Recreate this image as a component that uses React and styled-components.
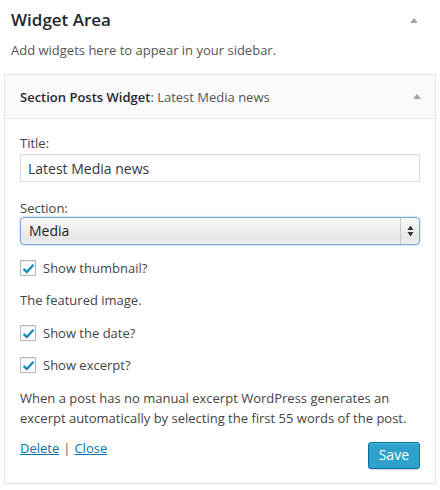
import React from "react";
import styled, { createGlobalStyle } from "styled-components";

const Global = createGlobalStyle`
  html, body { margin: 0; padding: 0; background: #fff; }
  body { font-family: "Open Sans", "Noto Sans", sans-serif; color: #444; font-size: 13px; }
  * { box-sizing: border-box; }
`;

const Page = styled.div`
  width: 440px;
  height: 490px;
  padding: 4px 4px 0 4px;
  background: #fff;
`;

const AreaHead = styled.div`
  display: flex;
  align-items: center;
  justify-content: space-between;
  padding: 0 7px 0 7px;
  height: 32px;
`;

const AreaTitle = styled.h2`
  margin: 0;
  font-size: 17px;
  font-weight: 600;
  color: #23282d;
  line-height: 32px;
`;

const Arrow = styled.span`
  width: 0;
  height: 0;
  border-left: 4px solid transparent;
  border-right: 4px solid transparent;
  border-bottom: 5px solid #a0a5aa;
  margin-right: ${p => p.$mr || 11}px;
`;

const AreaDesc = styled.p`
  margin: 4px 0 0 7px;
  font-size: 13px;
  color: #555;
  line-height: 20px;
`;

const Widget = styled.div`
  margin-top: 14px;
  border: 1px solid #e5e5e5;
  background: #fff;
  box-shadow: 0 1px 1px rgba(0,0,0,0.04);
`;

const WidgetHead = styled.div`
  display: flex;
  align-items: center;
  justify-content: space-between;
  height: 44px;
  padding: 0 0 0 15px;
  background: #fafafa;
  border-bottom: 1px solid #e5e5e5;
`;

const WidgetTitle = styled.h3`
  margin: 0;
  font-size: 13px;
  font-weight: 600;
  color: #23282d;
`;

const InTitle = styled.span`
  font-weight: 400;
  color: #555;
`;

const Body = styled.div`
  padding: 15px 15px 14px 15px;
`;

const Label = styled.label`
  display: block;
  font-size: 13px;
  line-height: 18px;
  color: #444;
`;

const Field = styled.div`
  margin-bottom: ${p => p.$mb || 14}px;
`;

const TextInput = styled.input`
  display: block;
  width: 100%;
  height: 28px;
  margin-top: 2px;
  padding: 3px 7px;
  border: 1px solid #ddd;
  box-shadow: inset 0 1px 2px rgba(0,0,0,0.07);
  font-family: "Open Sans", sans-serif;
  font-size: 14px;
  color: #32373c;
  background: #fff;
  outline: none;
`;

const SelectBox = styled.div`
  display: flex;
  align-items: stretch;
  height: 28px;
  border: 1px solid #7aa7d6;
  border-radius: 4px;
  background: linear-gradient(#fafafa, #e6e6e6 80%, #f2f2f2);
  box-shadow: 0 0 2px rgba(30,140,190,0.5);
  overflow: hidden;
`;

const SelectValue = styled.div`
  flex: 1;
  padding: 0 8px;
  font-size: 14px;
  line-height: 26px;
  color: #222;
`;

const SelectArrows = styled.div`
  width: 19px;
  border-left: 1px solid #c8c8c8;
  display: flex;
  align-items: center;
  justify-content: center;
`;

const CheckRow = styled.label`
  display: flex;
  align-items: center;
  gap: 7px;
  height: 18px;
  font-size: 13px;
  line-height: 18px;
  color: #444;
  margin-bottom: 14px;
`;

const Box = styled.span`
  width: 16px;
  height: 16px;
  border: 1px solid #b4b9be;
  background: #fff;
  box-shadow: inset 0 1px 2px rgba(0,0,0,0.1);
  display: flex;
  align-items: center;
  justify-content: center;
`;

const Desc = styled.p`
  margin: 0 0 ${p => p.$mb || 14}px 0;
  font-size: 13px;
  line-height: ${p => p.$lh || 19}px;
  color: #444;
`;

const Actions = styled.div`
  display: flex;
  align-items: flex-start;
  justify-content: space-between;
`;

const Links = styled.div`
  font-size: 13px;
  color: #444;
  line-height: 18px;
`;

const Link = styled.a`
  color: #0073aa;
  text-decoration: underline;
  cursor: pointer;
`;

const Sep = styled.span`
  margin: 0 4px;
  color: #666;
`;

const SaveBtn = styled.button`
  margin-top: 3px;
  height: 27px;
  padding: 0 10px 1px;
  background: #2ea2cc;
  border: 1px solid #0074a2;
  border-radius: 3px;
  box-shadow: inset 0 1px 0 rgba(120,200,230,0.5), 0 1px 0 rgba(0,0,0,0.15);
  color: #fff;
  font-family: "Open Sans", sans-serif;
  font-size: 14px;
  font-weight: 400;
  line-height: 24px;
`;

const Check = () => (
  <svg width="13" height="11" viewBox="0 0 13 11">
    <path d="M1.5 5.8 L4.8 9 L11.5 1.8" fill="none" stroke="#1e8cbe" strokeWidth="2.4" strokeLinejoin="miter" />
  </svg>
);

const UpDown = () => (
  <svg width="7" height="12" viewBox="0 0 7 12">
    <path d="M3.5 0.5 L6.5 5 L0.5 5 Z" fill="#333" />
    <path d="M3.5 11.5 L6.5 7 L0.5 7 Z" fill="#333" />
  </svg>
);

export default function App() {
  return (
    <Page>
      <Global />
      <AreaHead>
        <AreaTitle>Widget Area</AreaTitle>
        <Arrow />
      </AreaHead>
      <AreaDesc>Add widgets here to appear in your sidebar.</AreaDesc>
      <Widget>
        <WidgetHead>
          <WidgetTitle>
            Section Posts Widget<InTitle>: Latest Media news</InTitle>
          </WidgetTitle>
          <Arrow $mr={14} />
        </WidgetHead>
        <Body>
          <Field $mb={17}>
            <Label>Title:</Label>
            <TextInput defaultValue="Latest Media news" />
          </Field>
          <Field $mb={14}>
            <Label>Section:</Label>
            <SelectBox>
              <SelectValue>Media</SelectValue>
              <SelectArrows><UpDown /></SelectArrows>
            </SelectBox>
          </Field>
          <CheckRow>
            <Box><Check /></Box>Show thumbnail?
          </CheckRow>
          <Desc $mb={14}>The featured image.</Desc>
          <CheckRow>
            <Box><Check /></Box>Show the date?
          </CheckRow>
          <CheckRow>
            <Box><Check /></Box>Show excerpt?
          </CheckRow>
          <Desc $mb={11} $lh={20}>
            When a post has no manual excerpt WordPress generates an excerpt automatically by selecting the first 55 words of the post.
          </Desc>
          <Actions>
            <Links>
              <Link>Delete</Link><Sep>|</Sep><Link>Close</Link>
            </Links>
            <SaveBtn>Save</SaveBtn>
          </Actions>
        </Body>
      </Widget>
    </Page>
  );
}
